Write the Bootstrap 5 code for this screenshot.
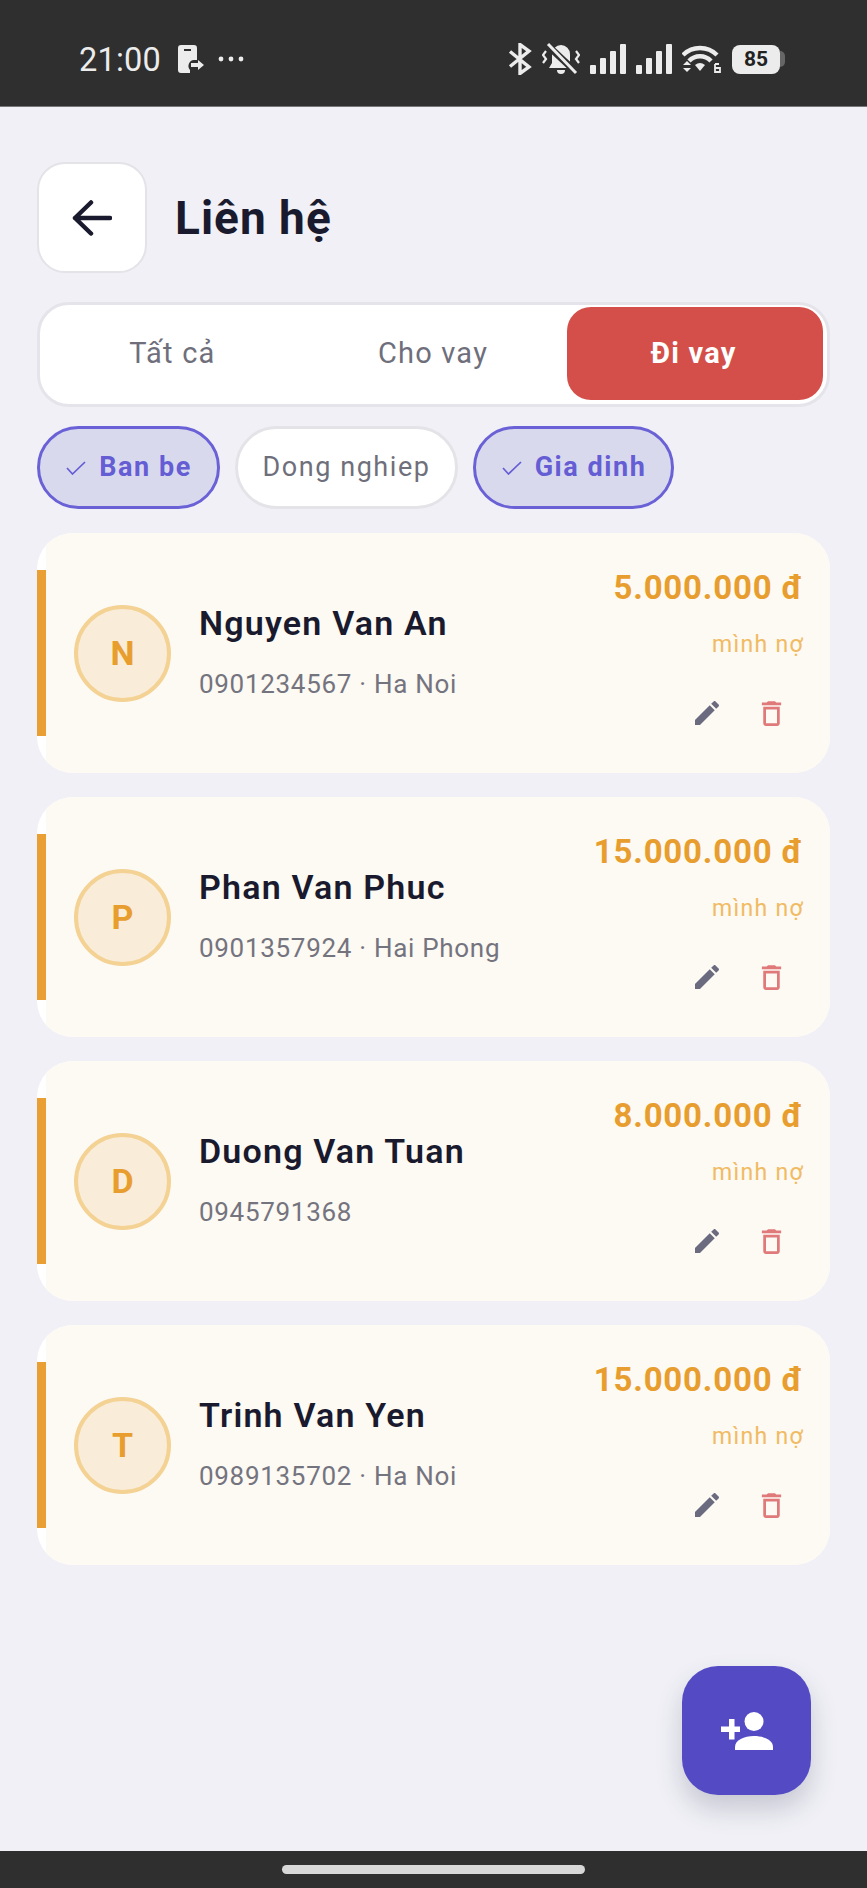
<!doctype html>
<html lang="vi">
<head>
<meta charset="utf-8">
<title>Liên hệ</title>
<link href="https://cdn.jsdelivr.net/npm/bootstrap@5.3.0/dist/css/bootstrap.min.css" rel="stylesheet">
<style>
html,body{margin:0;background:#f0f0f6;}
body{font-family:Roboto,"Noto Sans",sans-serif;color:#1a1a2e;}
.screen{width:867px;height:1888px;position:relative;overflow:hidden;background:#f0f0f6;}
.sbar{height:107px;background:#2f2f2f;color:#ececec;padding:12px 82px 0 79px;border-bottom:1px solid #777;}
.sbar-time{font-size:32.5px;font-weight:400;line-height:1;letter-spacing:.2px;padding-top:3px;}
.sleft-1{margin-left:17px;}
.sleft-2{margin-left:14px;}
.sright{gap:10px;}
.batwrap{gap:0;}
.bat{width:48px;height:29px;background:#ececec;border-radius:8px;color:#222;font-size:21px;font-weight:700;line-height:29px;text-align:center;}
.bat-tip{width:5px;height:16px;background:#666;border-radius:0 5px 5px 0;}
.content{padding:55px 37px 0 37px;}
.back-btn{width:110px;height:111px;background:#fff;border:2px solid #e3e3e8;border-radius:28px;padding:0;}
.back-btn:hover{background:#fff;border-color:#e3e3e8;}
.ptitle{font-size:46px;font-weight:700;margin:0 0 0 28px;line-height:1;color:#1a1a2e;letter-spacing:1px;}
.tabs{margin-top:29px;height:105px;background:#fff;border:3px solid #e4e4ea;border-radius:32px;padding:2px 4px 4px 6px;gap:5px;}
.tab-item{flex:1 1 0;border:0;border-radius:24px;font-size:29px;color:#6f6f7c;padding:0 3px 0 0;letter-spacing:1.2px;}
.tab-on,.tab-on:hover{background:#d44f49;color:#fff;font-weight:700;}
.chips{margin-top:19px;gap:15px;}
.chip{height:83px;border:3px solid #e4e4e8;background:#fff;border-radius:42px;font-size:27px;color:#6f6f7c;padding:0;letter-spacing:1.55px;gap:13px;}
.chip-a{width:183px;}
.chip-b{width:223px;}
.chip-c{width:201px;}
.chip-on,.chip-on:hover{background:#d9d9ee;border-color:#6a61d6;color:#655dd4;font-weight:700;padding-left:1px;}
.clist{margin-top:24px;gap:24px;}
.ccard{height:240px;background:#fff;border:0;border-radius:36px;overflow:hidden;padding-left:9px;position:relative;}
.ccard-in{background:#fdf9f3;height:100%;padding:0 27px 0 28px;}
.cbar{position:absolute;left:0;top:37px;width:9px;height:166px;background:#e99f33;}
.avatar{width:97px;height:97px;border-radius:50%;background:#f9ecd8;border:4px solid #f3d294;color:#e89e2f;font-size:34px;font-weight:700;flex:none;}
.cinfo{margin-left:28px;margin-top:-3px;}
.cname{font-size:34px;font-weight:600;line-height:1;color:#1a1a2e;letter-spacing:1.2px;}
.csub{font-size:26px;line-height:1;margin-top:31px;color:#74747f;letter-spacing:.7px;}
.cright{height:100%;padding-top:37px;}
.camount{font-size:33px;font-weight:700;line-height:36px;color:#e89e2f;letter-spacing:.8px;}
.cnote{font-size:23px;line-height:28px;margin-top:25px;color:#f0bb62;letter-spacing:1.3px;margin-right:-1px;}
.cact{margin-top:38px;gap:32px;margin-right:15px;}
.fab{position:absolute;left:682px;top:1666px;width:129px;height:129px;border-radius:36px;background:#544bc4;border:0;padding:0;box-shadow:0 14px 26px rgba(60,60,90,.22);}
.fab:hover{background:#544bc4;}
.navb{position:absolute;left:0;right:0;bottom:0;height:37px;background:#2f2f2f;}
.navpill{width:303px;height:9px;background:#d8d8d8;border-radius:5px;}
</style>
</head>
<body>
<div class="screen">
  <div class="sbar d-flex align-items-center justify-content-between">
    <div class="d-flex align-items-center">
      <span class="sbar-time">21:00</span>
      <svg class="sleft-1" width="26" height="28" viewBox="0 0 26 28" fill="#ececec"><path d="M3 0h13a3 3 0 0 1 3 3v12h-3a6 6 0 0 0-4 10v3H3a3 3 0 0 1-3-3V3a3 3 0 0 1 3-3z"/><rect x="6" y="4" width="7" height="2" fill="#2f2f2f"/><path d="M13 18h7v-3l6 5-6 5v-3h-7z"/></svg>
      <svg class="sleft-2" width="26" height="6" viewBox="0 0 26 6" fill="#ececec"><circle cx="3" cy="3" r="2.4"/><circle cx="13" cy="3" r="2.4"/><circle cx="23" cy="3" r="2.4"/></svg>
    </div>
    <div class="sright d-flex align-items-center">
      <svg width="24" height="32" viewBox="0 0 24 32" fill="none" stroke="#ececec" stroke-width="3.4"><path d="M2 8.500l19 15.500-9 6.500v-29l9 6.500-19 15.500"/></svg>
      <svg width="38" height="32" viewBox="0 0 38 32" fill="#ececec"><path d="M19 2a9 9 0 0 1 9 9v9l3 5H7l3-5v-9a9 9 0 0 1 9-9z"/><path d="M15 27h8a4 4 0 0 1-8 0z"/><path d="M4 1l30 28" stroke="#2f2f2f" stroke-width="7"/><path d="M6 1l28 29" stroke="#ececec" stroke-width="3"/><path d="M4 8l-3 4 3 4-3 4M34 8l3 4-3 4 3 4" fill="none" stroke="#ececec" stroke-width="2.200"/></svg>
      <svg width="36" height="30" viewBox="0 0 36 30" fill="#ececec"><rect x="0" y="21" width="6" height="9" rx="1"/><rect x="10" y="14" width="6" height="16" rx="1"/><rect x="20" y="7" width="6" height="23" rx="1"/><rect x="30" y="0" width="6" height="30" rx="1"/></svg>
      <svg width="36" height="30" viewBox="0 0 36 30" fill="#ececec"><rect x="0" y="21" width="6" height="9" rx="1"/><rect x="10" y="14" width="6" height="16" rx="1"/><rect x="20" y="7" width="6" height="23" rx="1"/><rect x="30" y="0" width="6" height="30" rx="1"/></svg>
      <svg width="40" height="28" viewBox="0 0 40 28" fill="none"><path d="M1 10a24 24 0 0 1 34 0M7 16a15 15 0 0 1 22 0" stroke="#ececec" stroke-width="4.400"/><path d="M13 20a8 8 0 0 1 10 0l-5 6z" fill="#ececec"/><path d="M1 20l4-4 4 4zM1 23l4 4 4-4z" fill="#ececec"/><path d="M33 19h4M33 19v8h5v-4h-5" stroke="#ececec" stroke-width="1.800"/></svg>
      <div class="batwrap d-flex align-items-center"><div class="bat">85</div><div class="bat-tip"></div></div>
    </div>
  </div>

  <div class="content">
    <div class="d-flex align-items-center">
      <button type="button" class="btn back-btn d-flex align-items-center justify-content-center" aria-label="Quay lại">
        <svg width="40" height="36" viewBox="0 0 40 36" fill="none" stroke="#1a1a2e" stroke-width="4.500" stroke-linecap="round" stroke-linejoin="round"><path d="M38 18H3M19 2.500L3 18l16 15.500"/></svg>
      </button>
      <h1 class="ptitle">Liên hệ</h1>
    </div>

    <div class="tabs d-flex">
      <button type="button" class="btn tab-item">Tất cả</button>
      <button type="button" class="btn tab-item">Cho vay</button>
      <button type="button" class="btn tab-item tab-on">Đi vay</button>
    </div>

    <div class="chips d-flex">
      <button type="button" class="btn chip chip-a chip-on d-flex align-items-center justify-content-center"><svg width="20" height="14" viewBox="0 0 20 14" fill="none" stroke="#655dd4" stroke-width="1.700"><path d="M1 7l5.500 6L19 1"/></svg>Ban be</button>
      <button type="button" class="btn chip chip-b d-flex align-items-center justify-content-center">Dong nghiep</button>
      <button type="button" class="btn chip chip-c chip-on d-flex align-items-center justify-content-center"><svg width="20" height="14" viewBox="0 0 20 14" fill="none" stroke="#655dd4" stroke-width="1.700"><path d="M1 7l5.500 6L19 1"/></svg>Gia dinh</button>
    </div>

    <div class="clist d-flex flex-column">
      <div class="card ccard"><span class="cbar"></span><div class="ccard-in d-flex align-items-center justify-content-between">
        <div class="d-flex align-items-center"><div class="avatar d-flex align-items-center justify-content-center">N</div><div class="cinfo"><div class="cname">Nguyen Van An</div><div class="csub">0901234567 · Ha Noi</div></div></div>
        <div class="cright d-flex flex-column align-items-end"><div class="camount">5.000.000 đ</div><div class="cnote">mình nợ</div><div class="cact d-flex"><svg width="32" height="32" viewBox="0 0 24 24" fill="#6b6b80"><path d="M3 17.250V21h3.750L17.810 9.940l-3.750-3.750L3 17.250zM20.710 7.040c.39-.39.39-1.020 0-1.410l-2.340-2.340c-.39-.39-1.020-.39-1.410 0l-1.830 1.830 3.750 3.750 1.830-1.830z"/></svg><svg width="33" height="33" viewBox="0 0 24 24" fill="#e07a7a"><path d="M6 19c0 1.100.9 2 2 2h8c1.100 0 2-.9 2-2V7H6v12zM8 9h8v10H8V9zm7.500-5l-1-1h-5l-1 1H5v2h14V4z"/></svg></div></div>
      </div></div>
      <div class="card ccard"><span class="cbar"></span><div class="ccard-in d-flex align-items-center justify-content-between">
        <div class="d-flex align-items-center"><div class="avatar d-flex align-items-center justify-content-center">P</div><div class="cinfo"><div class="cname">Phan Van Phuc</div><div class="csub">0901357924 · Hai Phong</div></div></div>
        <div class="cright d-flex flex-column align-items-end"><div class="camount">15.000.000 đ</div><div class="cnote">mình nợ</div><div class="cact d-flex"><svg width="32" height="32" viewBox="0 0 24 24" fill="#6b6b80"><path d="M3 17.250V21h3.750L17.810 9.940l-3.750-3.750L3 17.250zM20.710 7.040c.39-.39.39-1.020 0-1.410l-2.340-2.340c-.39-.39-1.020-.39-1.410 0l-1.830 1.830 3.750 3.750 1.830-1.830z"/></svg><svg width="33" height="33" viewBox="0 0 24 24" fill="#e07a7a"><path d="M6 19c0 1.100.9 2 2 2h8c1.100 0 2-.9 2-2V7H6v12zM8 9h8v10H8V9zm7.500-5l-1-1h-5l-1 1H5v2h14V4z"/></svg></div></div>
      </div></div>
      <div class="card ccard"><span class="cbar"></span><div class="ccard-in d-flex align-items-center justify-content-between">
        <div class="d-flex align-items-center"><div class="avatar d-flex align-items-center justify-content-center">D</div><div class="cinfo"><div class="cname">Duong Van Tuan</div><div class="csub">0945791368</div></div></div>
        <div class="cright d-flex flex-column align-items-end"><div class="camount">8.000.000 đ</div><div class="cnote">mình nợ</div><div class="cact d-flex"><svg width="32" height="32" viewBox="0 0 24 24" fill="#6b6b80"><path d="M3 17.250V21h3.750L17.810 9.940l-3.750-3.750L3 17.250zM20.710 7.040c.39-.39.39-1.020 0-1.410l-2.340-2.340c-.39-.39-1.020-.39-1.410 0l-1.830 1.830 3.750 3.750 1.830-1.830z"/></svg><svg width="33" height="33" viewBox="0 0 24 24" fill="#e07a7a"><path d="M6 19c0 1.100.9 2 2 2h8c1.100 0 2-.9 2-2V7H6v12zM8 9h8v10H8V9zm7.500-5l-1-1h-5l-1 1H5v2h14V4z"/></svg></div></div>
      </div></div>
      <div class="card ccard"><span class="cbar"></span><div class="ccard-in d-flex align-items-center justify-content-between">
        <div class="d-flex align-items-center"><div class="avatar d-flex align-items-center justify-content-center">T</div><div class="cinfo"><div class="cname">Trinh Van Yen</div><div class="csub">0989135702 · Ha Noi</div></div></div>
        <div class="cright d-flex flex-column align-items-end"><div class="camount">15.000.000 đ</div><div class="cnote">mình nợ</div><div class="cact d-flex"><svg width="32" height="32" viewBox="0 0 24 24" fill="#6b6b80"><path d="M3 17.250V21h3.750L17.810 9.940l-3.750-3.750L3 17.250zM20.710 7.040c.39-.39.39-1.020 0-1.410l-2.340-2.340c-.39-.39-1.020-.39-1.410 0l-1.830 1.830 3.750 3.750 1.830-1.830z"/></svg><svg width="33" height="33" viewBox="0 0 24 24" fill="#e07a7a"><path d="M6 19c0 1.100.9 2 2 2h8c1.100 0 2-.9 2-2V7H6v12zM8 9h8v10H8V9zm7.500-5l-1-1h-5l-1 1H5v2h14V4z"/></svg></div></div>
      </div></div>
    </div>
  </div>

  <button type="button" class="btn fab d-flex align-items-center justify-content-center" aria-label="Thêm liên hệ">
    <svg width="52" height="38" viewBox="0 0 52 38" fill="#fff"><circle cx="33" cy="9.500" r="9.500"/><path d="M14 38v-3c0-7 9-11 19-11s19 4 19 11v3z"/><path d="M8 7h5.500v7.500H19V20h-5.500v7.500H8V20H0v-5.500h8z"/></svg>
  </button>
  <div class="navb d-flex align-items-center justify-content-center"><div class="navpill"></div></div>
</div>
<script src="https://cdn.jsdelivr.net/npm/bootstrap@5.3.0/dist/js/bootstrap.bundle.min.js"></script>
</body>
</html>
